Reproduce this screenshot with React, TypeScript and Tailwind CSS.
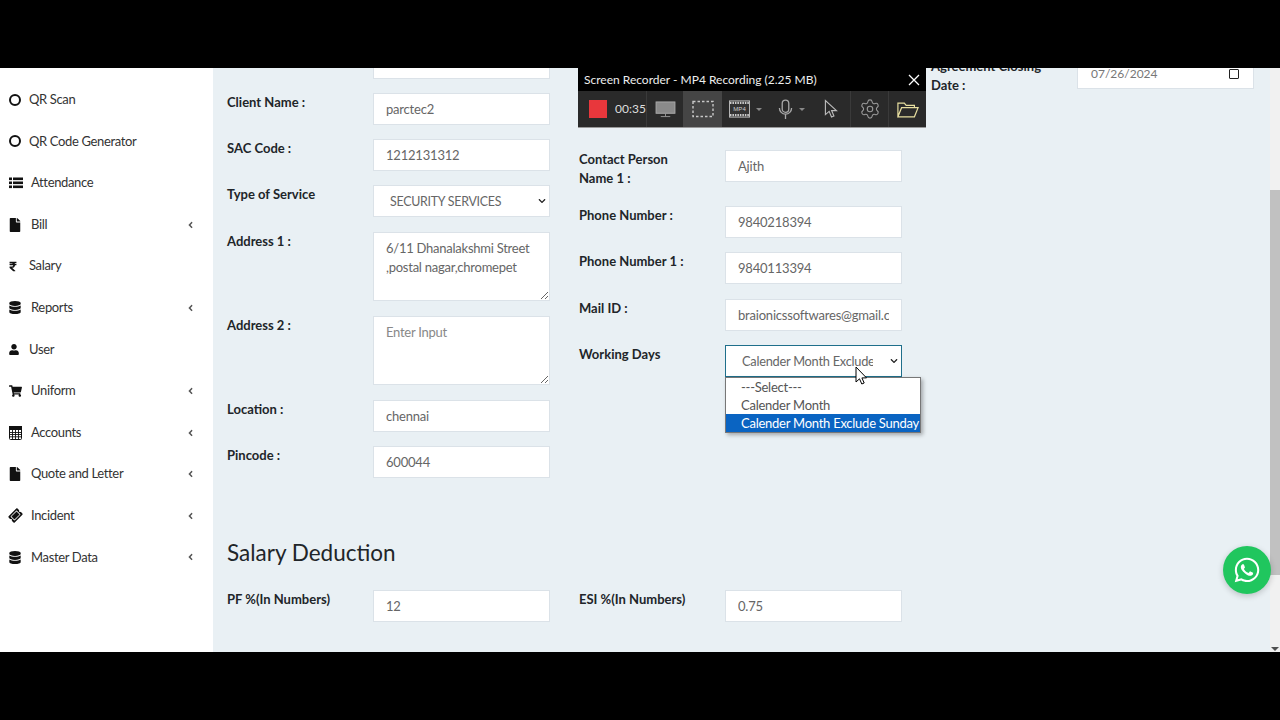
import React from 'react';
import { FaFile, FaDatabase, FaUser, FaShoppingCart, FaTicketAlt, FaAngleLeft, FaRupeeSign, FaWhatsapp, FaChevronDown } from 'react-icons/fa';
import { Settings } from 'lucide-react';

const font = "[font-family:'Lato','Noto_Sans',sans-serif]";

function ListIcon() {
  return (
    <svg viewBox="0 0 14 12" className="w-[14px] h-[12px]" fill="#111">
      <rect x="0" y="0.5" width="3" height="2.6" /><rect x="4" y="0.5" width="10" height="2.6" />
      <rect x="0" y="4.5" width="3" height="2.6" /><rect x="4" y="4.5" width="10" height="2.6" />
      <rect x="0" y="8.5" width="3" height="2.6" /><rect x="4" y="8.5" width="10" height="2.6" />
    </svg>
  );
}

function GridIcon() {
  return (
    <svg viewBox="0 0 13 14" className="w-[13px] h-[14px]" fill="none" stroke="#111">
      <rect x="0.5" y="0.5" width="12" height="13" rx="1" />
      <rect x="0.5" y="0.5" width="12" height="3" fill="#111" />
      <path d="M0.5 6.5h12M0.5 8.5h12M0.5 10.8h12M3.5 4v9M6.5 4v9M9.5 4v9" strokeWidth="0.9" />
    </svg>
  );
}

const Ring = () => <span className="block w-[12px] h-[12px] rounded-full border-2 border-[#111]" />;

type Item = { label: string; icon: React.ReactNode; wide?: boolean; arrow?: boolean };
const items: Item[] = [
  { label: 'QR Scan', icon: <Ring /> },
  { label: 'QR Code Generator', icon: <Ring /> },
  { label: 'Attendance', icon: <ListIcon />, wide: true },
  { label: 'Bill', icon: <FaFile className="w-[12px] h-[14px] text-[#111]" />, wide: true, arrow: true },
  { label: 'Salary', icon: <FaRupeeSign className="w-[8px] h-[11px] text-[#111]" /> },
  { label: 'Reports', icon: <FaDatabase className="w-[12px] h-[13px] text-[#111]" />, wide: true, arrow: true },
  { label: 'User', icon: <FaUser className="w-[10px] h-[11px] text-[#111]" /> },
  { label: 'Uniform', icon: <FaShoppingCart className="w-[13px] h-[12px] text-[#111]" />, wide: true, arrow: true },
  { label: 'Accounts', icon: <GridIcon />, wide: true, arrow: true },
  { label: 'Quote and Letter', icon: <FaFile className="w-[12px] h-[14px] text-[#111]" />, wide: true, arrow: true },
  { label: 'Incident', icon: <FaTicketAlt className="w-[13px] h-[13px] text-[#111] -rotate-45" />, wide: true, arrow: true },
  { label: 'Master Data', icon: <FaDatabase className="w-[12px] h-[13px] text-[#111]" />, wide: true, arrow: true },
];

const inputCls = 'w-[177px] h-[32px] bg-white border border-[#dbe2e8] px-3 text-[13px] tracking-[-0.2px] text-[#666] outline-none shrink-0 ' + font;
const labelCls = 'w-[146px] text-[13px] leading-[19px] font-bold text-[#212529] shrink-0';

function Row({ label, value, mb }: { label: React.ReactNode; value?: string; mb?: string }) {
  return (
    <div className={'flex items-start ' + (mb ?? 'mb-[14px]')}>
      <div className={labelCls}>{label}</div>
      <input readOnly className={inputCls} value={value ?? ''} />
    </div>
  );
}

function Area({ label, value, placeholder }: { label: string; value?: string; placeholder?: string }) {
  return (
    <div className="flex items-start mb-[15px]">
      <div className={labelCls}>{label}</div>
      <textarea readOnly className={'w-[177px] h-[69px] bg-white border border-[#dbe2e8] px-3 py-[6px] text-[13px] tracking-[-0.25px] leading-[19px] text-[#666] outline-none shrink-0 placeholder:text-[#888] ' + font} value={value ?? ''} placeholder={placeholder} />
    </div>
  );
}

function Select({ border, pr, size, value, children }: { border: string; pr: string; size: string; value: string; children: React.ReactNode }) {
  return (
    <div className="relative w-[177px] h-[32px] shrink-0">
      <select className={'appearance-none w-full h-full bg-white border pl-[16px] pt-[2px] tracking-[-0.25px] text-[#666] outline-none ' + size + ' ' + border + ' ' + pr + ' ' + font} defaultValue={value}>
        {children}
      </select>
      <FaChevronDown className="absolute right-[3px] top-[12px] w-[10px] h-[8px] text-[#222]" />
    </div>
  );
}

function Recorder() {
  return (
    <div className="absolute left-[578px] top-0 w-[348px] h-[60px] bg-black z-10 flex flex-col">
      <div className="h-[23px] flex items-center justify-between pl-[6px] pr-[6px] text-[#eee] text-[12px]">
        <span>Screen Recorder - MP4 Recording (2.25 MB)</span>
        <svg viewBox="0 0 12 12" className="w-[12px] h-[12px]" stroke="#fff" strokeWidth="1.3"><path d="M1 1l10 10M11 1L1 11" /></svg>
      </div>
      <div className="h-[37px] bg-[#2a2a2a] flex items-stretch border-b border-[#999]">
        <div className="w-[69px] flex items-center pl-[11px] gap-[8px] border-r border-[#3a3a3a]">
          <div className="w-[18px] h-[18px] bg-[#e8373c]" />
          <span className="text-[12px] text-[#ddd]">00:35</span>
        </div>
        <div className="w-[36px] flex items-center justify-center">
          <svg viewBox="0 0 22 18" className="w-[21px] h-[17px]"><rect x="1" y="1" width="20" height="12" fill="#8a8a8a" stroke="#aaa" /><path d="M11 13v3M6 16.5h10" stroke="#999" /></svg>
        </div>
        <div className="w-[39px] bg-[#454545] flex items-center justify-center">
          <svg viewBox="0 0 22 18" className="w-[22px] h-[18px]"><rect x="1" y="1.5" width="20" height="15" fill="none" stroke="#c8c8c8" strokeWidth="1.4" strokeDasharray="2.5 2" /></svg>
        </div>
        <div className="w-[50px] flex items-center pl-[7px] gap-[6px]">
          <svg viewBox="0 0 22 18" className="w-[21px] h-[18px]">
            <rect x="0.5" y="0.5" width="21" height="17" fill="#333" stroke="#bbb" />
            <path d="M1 2.5h20M1 15.5h20" stroke="#ccc" strokeWidth="2.4" strokeDasharray="1.6 1" />
            <text x="11" y="11.4" textAnchor="middle" fontSize="6.4" fill="#ccc" fontFamily="Liberation Sans">MP4</text>
          </svg>
          <span className="w-0 h-0 border-x-[3px] border-x-transparent border-t-[3px] border-t-[#888]" />
        </div>
        <div className="w-[41px] flex items-center pl-[6px] gap-[6px]">
          <svg viewBox="0 0 16 22" className="w-[15px] h-[21px]" fill="none" stroke="#a8a8a8" strokeWidth="1.4"><rect x="4.5" y="1" width="7" height="13" rx="3.5" /><path d="M1.5 9.5a6.5 6.5 0 0 0 13 0M8 16v5" /></svg>
          <span className="w-0 h-0 border-x-[3px] border-x-transparent border-t-[3px] border-t-[#888]" />
        </div>
        <div className="w-[37px] flex items-center justify-center">
          <svg viewBox="0 0 16 20" className="w-[15px] h-[20px]" fill="none" stroke="#bbb" strokeWidth="1.2"><path d="M1.5 1v15l4-3.5 2.5 6 2.6-1.1-2.5-5.7h5.2z" /></svg>
        </div>
        <div className="w-[38px] flex items-center justify-center border-l border-[#3a3a3a]">
          <Settings className="w-[22px] h-[22px] text-[#9a9a9a]" strokeWidth={1.2} />
        </div>
        <div className="flex-1 flex items-center justify-center border-l border-[#3a3a3a]">
          <svg viewBox="0 0 24 18" className="w-[22px] h-[17px]" fill="none" stroke="#e8dfa0" strokeWidth="1.3"><path d="M1 17V2h7l2 2.5h9V7M1 17l4-10h18l-4 10z" /></svg>
        </div>
      </div>
    </div>
  );
}

export default function App() {
  return (
    <div className={'w-[1280px] h-[720px] bg-black pt-[68px] overflow-hidden ' + font}>
      <div className="h-[584px] flex bg-[#e9f0f4] relative overflow-hidden">
        <aside className="w-[213px] bg-white shrink-0 pt-[11px] text-[#333]">
          {items.map((it) => (
            <div key={it.label} className="h-[41.6px] flex items-center pl-[9px] pr-[18px] text-[13px] tracking-[-0.35px]">
              <span className={'flex items-center shrink-0 ' + (it.wide ? 'w-[22px]' : 'w-[20px]')}>{it.icon}</span>
              <span className="flex-1">{it.label}</span>
              {it.arrow && <FaAngleLeft className="w-[9px] h-[10px] text-[#555]" />}
            </div>
          ))}
        </aside>

        <main className="flex-1 overflow-hidden pl-[14px]">
          <div className="mt-[-21px] flex">
            <div className="w-[352px] shrink-0">
              <Row label="" value="" />
              <Row label="Client Name :" value="parctec2" />
              <Row label="SAC Code :" value="1212131312" />
              <div className="flex items-start mb-[15px]">
                <div className={labelCls}>Type of Service</div>
                <Select border="border-[#dbe2e8]" pr="pr-[20px]" size="text-[12.4px]" value="s"><option value="s">SECURITY SERVICES</option></Select>
              </div>
              <Area label="Address 1 :" value={'6/11 Dhanalakshmi Street ,postal nagar,chromepet'} />
              <Area label="Address 2 :" placeholder="Enter Input" />
              <Row label="Location :" value="chennai" />
              <Row label="Pincode :" value="600044" />
            </div>
            <div className="w-[352px] shrink-0 pt-[103px]">
              <div className="flex items-start mb-[18px]">
                <div className={labelCls}>Contact Person<br />Name 1 :</div>
                <input readOnly className={inputCls} value="Ajith" />
              </div>
              <Row label="Phone Number :" value="9840218394" />
              <Row label="Phone Number 1 :" value="9840113394" mb="mb-[15px]" />
              <Row label="Mail ID :" value="braionicssoftwares@gmail.com" />
              <div className="flex items-start">
                <div className={labelCls}>Working Days</div>
                <Select border="border-[#1f6f8b]" pr="pr-[28px]" size="text-[12.8px]" value="e">
                  <option>---Select---</option>
                  <option>Calender Month</option>
                  <option value="e">Calender Month Exclude Sunday</option>
                </Select>
              </div>
            </div>
            <div className="w-[340px] shrink-0 pt-[10px]">
              <div className="flex items-start">
                <div className={labelCls}>Agreement Closing<br />Date :</div>
                <div className="w-[177px] h-[32px] bg-white border border-[#dbe2e8] pl-[13px] pr-[13px] pt-[2px] flex items-center justify-between text-[12px] text-[#777] shrink-0">
                  <span>07/26/2024</span>
                  <span className="w-[10px] h-[10px] border-[1.5px] border-[#222] rounded-[1px] mr-[1px]" />
                </div>
              </div>
            </div>
          </div>
          <h2 className="mt-[46px] text-[22.5px] leading-[30px] text-[#212529]">Salary Deduction</h2>
          <div className="mt-[22px] flex">
            <div className="w-[352px] shrink-0"><Row label="PF %(In Numbers)" value="12" /></div>
            <div className="w-[352px] shrink-0"><Row label="ESI %(In Numbers)" value="0.75" /></div>
          </div>
        </main>

        <div className="w-[10px] bg-[#f1f1f1] shrink-0 pt-[122px] flex flex-col">
          <div className="h-[385px] bg-[#c1c1c1]" />
          <div className="flex-1 flex items-end justify-center pb-[1px]">
            <span className="w-0 h-0 border-x-[4px] border-x-transparent border-t-[4px] border-t-[#505050]" />
          </div>
        </div>

        <Recorder />

        <div className="absolute left-[725px] top-[309px] w-[196px] bg-white border border-[#777] shadow-[2px_2px_4px_rgba(0,0,0,0.3)] text-[13px] tracking-[-0.25px] leading-[18px] text-[#555] z-10">
          <div className="pl-[15px]">---Select---</div>
          <div className="pl-[15px]">Calender Month</div>
          <div className="pl-[15px] bg-[#0a64c2] text-white whitespace-nowrap">Calender Month Exclude Sunday</div>
        </div>

        <svg viewBox="0 0 12 19" className="absolute left-[855px] top-[298px] w-[12px] h-[19px] z-20"><path d="M1 1v15l3.5-3.2 2.3 5.2 2.4-1-2.3-5.1h4.6z" fill="#fff" stroke="#000" strokeWidth="1" /></svg>

        <div className="absolute left-[1223px] top-[478px] w-[48px] h-[48px] rounded-full bg-[#20c65e] shadow-[0_2px_6px_rgba(0,0,0,0.2)] flex items-center justify-center z-10">
          <FaWhatsapp className="w-[28px] h-[28px] text-white" />
        </div>
      </div>
    </div>
  );
}
